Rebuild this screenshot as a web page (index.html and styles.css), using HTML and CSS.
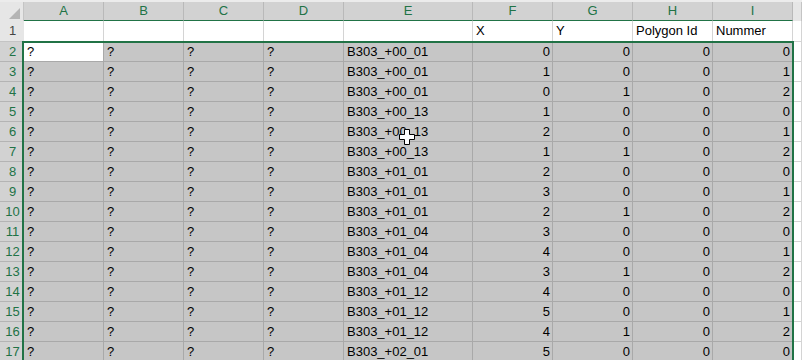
FILE: index.html
```html
<!DOCTYPE html>
<html lang="en">
<head>
    <meta charset="UTF-8">
    <title>Sheet1</title>
    <link rel="stylesheet" href="styles.css">
</head>
<body>
    <div class="sheet">
        <div class="row head-row">
            <div class="corner"><span class="tri"></span></div>
            <div class="col-head sel">A</div>
            <div class="col-head sel">B</div>
            <div class="col-head sel">C</div>
            <div class="col-head sel">D</div>
            <div class="col-head sel">E</div>
            <div class="col-head sel">F</div>
            <div class="col-head sel">G</div>
            <div class="col-head sel">H</div>
            <div class="col-head sel">I</div>
            <div class="col-head"></div>
        </div>
        <div id="rows"></div>

        <div class="selection"></div>
        <svg class="cursor" width="16" height="17" viewBox="0 0 16 17">
            <polygon points="5.5,0.5 10.5,0.5 10.5,5.5 15.5,5.5 15.5,10.5 10.5,10.5 10.5,15.5 5.5,15.5 5.5,10.5 0.5,10.5 0.5,5.5 5.5,5.5" fill="#fff" stroke="#000" stroke-width="1"/>
        </svg>
    </div>

    <script>
        let data = [
            ["B303_+00_01", 0, 0, 0, 0],
            ["B303_+00_01", 1, 0, 0, 1],
            ["B303_+00_01", 0, 1, 0, 2],
            ["B303_+00_13", 1, 0, 0, 0],
            ["B303_+00_13", 2, 0, 0, 1],
            ["B303_+00_13", 1, 1, 0, 2],
            ["B303_+01_01", 2, 0, 0, 0],
            ["B303_+01_01", 3, 0, 0, 1],
            ["B303_+01_01", 2, 1, 0, 2],
            ["B303_+01_04", 3, 0, 0, 0],
            ["B303_+01_04", 4, 0, 0, 1],
            ["B303_+01_04", 3, 1, 0, 2],
            ["B303_+01_12", 4, 0, 0, 0],
            ["B303_+01_12", 5, 0, 0, 1],
            ["B303_+01_12", 4, 1, 0, 2],
            ["B303_+02_01", 5, 0, 0, 0]
        ];

        let html = `
            <div class="row first-row">
                <div class="row-head">1</div>
                <div class="cell"></div><div class="cell"></div><div class="cell"></div><div class="cell"></div>
                <div class="cell"></div>
                <div class="cell">X</div><div class="cell">Y</div>
                <div class="cell">Polygon Id</div><div class="cell">Nummer</div>
                <div class="cell"></div>
            </div>`;

        data.forEach((r, i) => {
            let nums = r.slice(1).map(n => `<div class="cell num sel">${n}</div>`).join('');
            html += `
            <div class="row">
                <div class="row-head sel">${i + 2}</div>
                <div class="cell sel${i === 0 ? ' active' : ''}">?</div>
                <div class="cell sel">?</div><div class="cell sel">?</div><div class="cell sel">?</div>
                <div class="cell sel">${r[0]}</div>
                ${nums}
                <div class="cell"></div>
            </div>`;
        });

        document.getElementById("rows").innerHTML = html;
    </script>
</body>
</html>
```

FILE: styles.css
```css
body {
    margin: 0;
    background: #fff;
    font-family: "Liberation Sans", Arial, sans-serif;
    font-size: 13px;
    color: #000;
    overflow: hidden;
}
.sheet {
    position: relative;
    width: 802px;
    height: 360px;
    overflow: hidden;
}
.row {
    display: grid;
    grid-template-columns: 24px 80px 80px 80px 80px 129px 80px 80px 80px 80px 1fr;
    height: 20px;
}
.head-row {
    height: 21px;
    background: #e6e6e6;
    border-top: 2px solid #ececec;
    box-sizing: border-box;
}
.corner {
    position: relative;
    background: #e6e6e6;
    border-right: 1px solid #c4c4c4;
}
.corner .tri {
    position: absolute;
    right: 3px;
    bottom: 2px;
    width: 0;
    height: 0;
    border-left: 11px solid transparent;
    border-bottom: 11px solid #b4b4b4;
}
.col-head {
    box-sizing: border-box;
    text-align: center;
    line-height: 18px;
    color: #444;
    border-right: 1px solid #c4c4c4;
}
.col-head.sel {
    background: #d2d2d2;
    color: #217346;
    border-right-color: #b9b9b9;
    border-bottom: 1px solid #217346;
    line-height: 17px;
}
.first-row {
    height: 21px;
}
.row-head {
    box-sizing: border-box;
    background: #e6e6e6;
    color: #444;
    text-align: center;
    line-height: 19px;
    padding-left: 1px;
    border-bottom: 1px solid #c4c4c4;
}
.row-head.sel {
    background: #d2d2d2;
    color: #217346;
    border-bottom-color: #b4b4b4;
}
.cell {
    box-sizing: border-box;
    border-right: 1px solid #d4d4d4;
    border-bottom: 1px solid #d4d4d4;
    padding: 0 3px;
    line-height: 20px;
    white-space: nowrap;
    overflow: hidden;
}
.cell.sel {
    background: #c6c6c6;
    border-color: #a9a9a9;
}
.cell.active {
    background: #fff;
}
.cell.num {
    text-align: right;
    padding-right: 2px;
}
.selection {
    position: absolute;
    left: 22px;
    top: 41px;
    width: 772px;
    height: 340px;
    box-sizing: border-box;
    border: 2px solid #217346;
    pointer-events: none;
}
.cursor {
    position: absolute;
    left: 399px;
    top: 129px;
}
```
